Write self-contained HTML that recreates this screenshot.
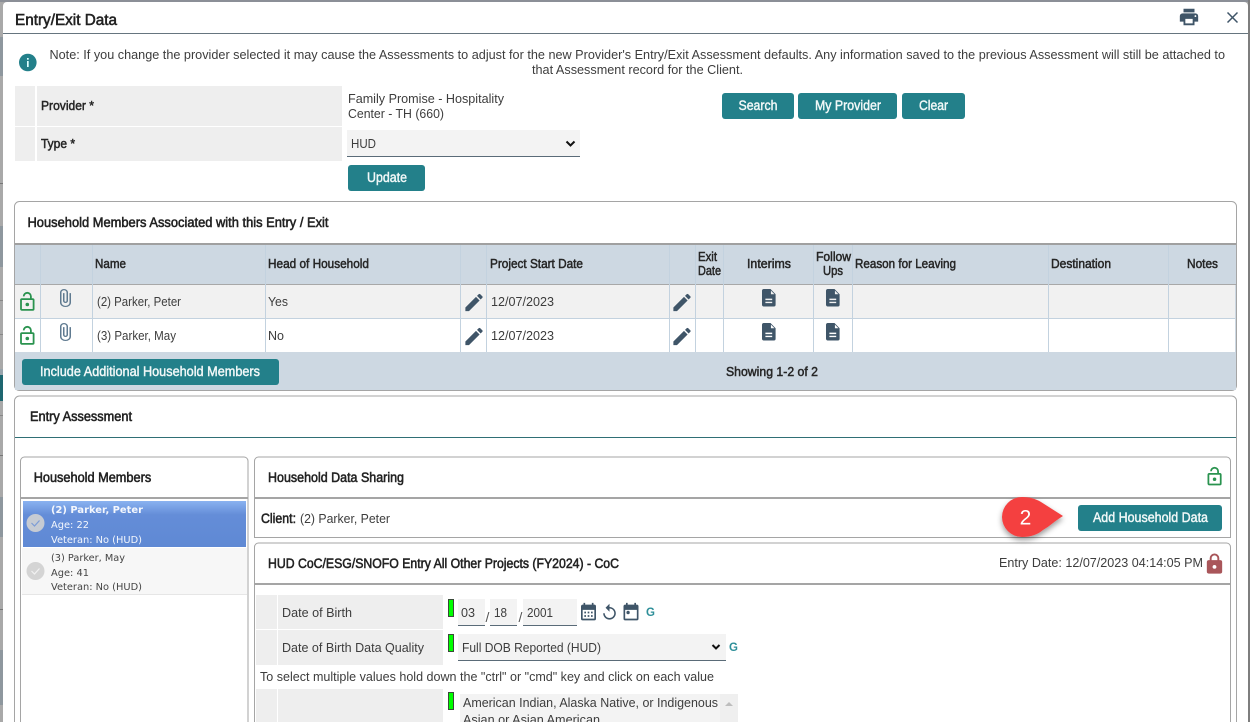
<!DOCTYPE html>
<html lang="en">
<head>
<meta charset="utf-8">
<title>Entry/Exit Data</title>
<style>
html,body{margin:0;padding:0;width:1250px;height:722px;overflow:hidden;background:#a8a8a8}
svg{display:block}
text{font-family:"Liberation Sans",Arial,sans-serif;font-size:13px;fill:#3d3d3d}
.b{fill:#262626;stroke:#262626;stroke-width:.5px}
.w{fill:#f2f8f8;stroke:#f2f8f8;stroke-width:.42px;font-size:13.5px}
.h{fill:#222;stroke:#222;stroke-width:.55px;font-size:13.5px}
.d{font-family:"DejaVu Sans",sans-serif;font-size:10px;fill:#444}
.ds{font-family:"DejaVu Sans",sans-serif;font-size:10px;fill:#f4f7fd}
.btn{fill:#23808a}
.ln{stroke:#c3d2df;stroke-width:1}
.sec{fill:#eeeeee}
.inp{fill:#f3f3f3}
.ub{fill:#5a6b78}
.ic{fill:#3f5568}
.gr{fill:#2a934f}
.g{font-size:11.500px;font-weight:bold;fill:#2e8f99}
</style>
</head>
<body>
<svg width="1250" height="722" viewBox="0 0 1250 722" xmlns="http://www.w3.org/2000/svg">
<defs>
<linearGradient id="sel" x1="0" y1="0" x2="0" y2="1"><stop offset="0" stop-color="#8ab2f0"/><stop offset=".3" stop-color="#648dd8"/><stop offset="1" stop-color="#5f89d4"/></linearGradient>
<filter id="sh" x="-30%" y="-30%" width="160%" height="170%"><feDropShadow dx="0" dy="3" stdDeviation="3" flood-color="#000" flood-opacity=".4"/></filter>
<path id="unlock" d="M18,20V10H6V20H18M18,8A2,2 0 0,1 20,10V20A2,2 0 0,1 18,22H6C4.89,22 4,21.1 4,20V10A2,2 0 0,1 6,8H15V6A3,3 0 0,0 12,3A3,3 0 0,0 9,6H7A5,5 0 0,1 12,1A5,5 0 0,1 17,6V8H18M12,17A2,2 0 0,1 10,15A2,2 0 0,1 12,13A2,2 0 0,1 14,15A2,2 0 0,1 12,17Z"/>
<path id="pencil" d="M20.71,7.04C21.1,6.65 21.1,6 20.71,5.63L18.37,3.29C18,2.9 17.35,2.9 16.96,3.29L15.12,5.12L18.87,8.87M3,17.25V21H6.75L17.81,9.93L14.06,6.18L3,17.25Z"/>
<path id="doc" fill-rule="evenodd" d="M6,2H14L20,8V20A2,2 0 0,1 18,22H6C4.89,22 4,21.1 4,20V4C4,2.89 4.89,2 6,2ZM14.500,3.800V8H18.700ZM8,13V14.700H16V13ZM8,16.500V18.200H16V16.500Z"/>
<path id="clip" d="M16.5,6V17.5A4,4 0 0,1 12.5,21.5A4,4 0 0,1 8.5,17.5V5A2.5,2.5 0 0,1 11,2.5A2.5,2.5 0 0,1 13.5,5V15.5A1,1 0 0,1 12.5,16.5A1,1 0 0,1 11.5,15.5V6H10V15.5A2.5,2.5 0 0,0 12.5,18A2.5,2.5 0 0,0 15,15.5V5A4,4 0 0,0 11,1A4,4 0 0,0 7,5V17.5A5.5,5.5 0 0,0 12.5,23A5.5,5.5 0 0,0 18,17.5V6H16.5Z"/>
</defs>

<!-- backdrop -->
<rect width="1250" height="722" fill="#a9a9a9"/>
<rect width="1250" height="2" fill="#8b8f97"/>
<rect x="0" y="37" width="3" height="39" fill="#8e979e"/>
<rect x="0" y="183" width="3" height="1" fill="#777"/>
<rect x="0" y="226" width="3" height="41" fill="#8e979e"/>
<rect x="0" y="300" width="3" height="1" fill="#888"/>
<rect x="0" y="334" width="3" height="1" fill="#888"/>
<rect x="0" y="369" width="3" height="6" fill="#98a4ac"/>
<rect x="0" y="375" width="3" height="26" fill="#1e6670"/>
<rect x="0" y="415" width="3" height="1" fill="#888"/>
<rect x="0" y="455" width="3" height="1" fill="#777"/>
<rect x="0" y="497" width="3" height="40" fill="#8e979e"/>
<rect x="0" y="609" width="3" height="1" fill="#777"/>
<rect x="0" y="650" width="3" height="55" fill="#8e979e"/>
<rect x="1248" y="0" width="2" height="722" fill="#7e7e7e"/>

<!-- modal -->
<path d="M3,722V6a4,4 0 0 1 4,-4H1244a4,4 0 0 1 4,4V722Z" fill="#fff"/>
<rect x="3" y="33" width="1245" height="1" fill="#66757f"/>
<text x="15" y="25" class="h" style="font-size:15.500px" textLength="102" lengthAdjust="spacingAndGlyphs">Entry/Exit Data</text>
<svg x="1178" y="6" width="22" height="22" viewBox="0 0 24 24"><path class="ic" d="M18,3H6V7H18M19,12A1,1 0 0,1 18,11A1,1 0 0,1 19,10A1,1 0 0,1 20,11A1,1 0 0,1 19,12M16,19H8V14H16M19,8H5A3,3 0 0,0 2,11V17H6V21H18V17H22V11A3,3 0 0,0 19,8Z"/></svg>
<path d="M1227.500,12.500L1237.500,22.500M1237.500,12.500L1227.500,22.500" stroke="#3f5568" stroke-width="1.500" fill="none"/>

<!-- note -->
<circle cx="27.800" cy="62.500" r="8.800" fill="#23808a"/>
<rect x="27" y="61" width="1.700" height="6" fill="#dff"/>
<rect x="27" y="58" width="1.700" height="1.700" fill="#dff"/>
<text x="49.500" y="59" textLength="1175.500" lengthAdjust="spacingAndGlyphs">Note: If you change the provider selected it may cause the Assessments to adjust for the new Provider's Entry/Exit Assessment defaults. Any information saved to the previous Assessment will still be attached to</text>
<text x="532" y="74" textLength="211" lengthAdjust="spacingAndGlyphs">that Assessment record for the Client.</text>

<!-- provider form -->
<rect x="15" y="86" width="20" height="40" class="sec"/><rect x="37" y="86" width="305" height="40" class="sec"/>
<rect x="15" y="127" width="20" height="34" class="sec"/><rect x="37" y="127" width="305" height="34" class="sec"/>
<text x="41" y="110" class="b" textLength="53" lengthAdjust="spacingAndGlyphs">Provider *</text>
<text x="41" y="148" class="b" textLength="34" lengthAdjust="spacingAndGlyphs">Type *</text>
<text x="348" y="103" textLength="156" lengthAdjust="spacingAndGlyphs">Family Promise - Hospitality</text>
<text x="348" y="118" textLength="96" lengthAdjust="spacingAndGlyphs">Center - TH (660)</text>
<rect x="347" y="130" width="233" height="26" class="inp"/><rect x="347" y="156" width="233" height="1" class="ub"/>
<text x="351" y="148" textLength="25" lengthAdjust="spacingAndGlyphs">HUD</text>
<path d="M566.500,141.500L570.500,145.500L574.500,141.500" stroke="#111" stroke-width="2" fill="none"/>
<rect x="348" y="165" width="77" height="26" rx="3" class="btn"/>
<text x="367" y="182" class="w" textLength="40" lengthAdjust="spacingAndGlyphs">Update</text>
<rect x="722" y="93" width="72" height="26" rx="3" class="btn"/>
<text x="738.500" y="110" class="w" textLength="39" lengthAdjust="spacingAndGlyphs">Search</text>
<rect x="798" y="93" width="99" height="26" rx="3" class="btn"/>
<text x="815" y="110" class="w" textLength="66" lengthAdjust="spacingAndGlyphs">My Provider</text>
<rect x="902" y="93" width="63" height="26" rx="3" class="btn"/>
<text x="919" y="110" class="w" textLength="29" lengthAdjust="spacingAndGlyphs">Clear</text>

<!-- household panel -->
<rect x="14.500" y="201.500" width="1222" height="189" rx="5" fill="#fff" stroke="#a5a5a5"/>
<text x="27.500" y="227" class="h" textLength="301" lengthAdjust="spacingAndGlyphs">Household Members Associated with this Entry / Exit</text>
<rect x="15" y="245" width="1221" height="145" fill="#cdd8e2"/>
<rect x="15" y="243" width="1221" height="2" fill="#a0a0a0"/>
<rect x="15" y="284" width="1221" height="1" fill="#a8a8a8"/>
<rect x="15" y="285" width="1220" height="33" fill="#f1f1f1"/>
<rect x="15" y="319" width="1220" height="33" fill="#fff"/>
<rect x="15" y="318" width="1220" height="1" fill="#c3d2df"/>
<g class="ln">
<path d="M40.500,245V352M92.500,245V352M265.500,245V352M460.500,245V352M486.500,245V352M669.500,245V352M695.500,245V352M723.500,245V352M813.500,245V352M852.500,245V352M1048.500,245V352M1168.500,245V352" fill="none"/>
</g>
<text x="95" y="268" class="b" textLength="31" lengthAdjust="spacingAndGlyphs">Name</text>
<text x="268" y="268" class="b" textLength="101" lengthAdjust="spacingAndGlyphs">Head of Household</text>
<text x="490" y="268" class="b" textLength="93" lengthAdjust="spacingAndGlyphs">Project Start Date</text>
<text x="698" y="261" class="b" textLength="19" lengthAdjust="spacingAndGlyphs">Exit</text>
<text x="698" y="275" class="b" textLength="23" lengthAdjust="spacingAndGlyphs">Date</text>
<text x="747" y="268" class="b" textLength="44" lengthAdjust="spacingAndGlyphs">Interims</text>
<text x="816" y="261" class="b" textLength="35" lengthAdjust="spacingAndGlyphs">Follow</text>
<text x="823" y="275" class="b" textLength="20" lengthAdjust="spacingAndGlyphs">Ups</text>
<text x="855" y="268" class="b" textLength="101" lengthAdjust="spacingAndGlyphs">Reason for Leaving</text>
<text x="1051" y="268" class="b" textLength="60" lengthAdjust="spacingAndGlyphs">Destination</text>
<text x="1187" y="268" class="b" textLength="31" lengthAdjust="spacingAndGlyphs">Notes</text>
<text x="97" y="306" textLength="84" lengthAdjust="spacingAndGlyphs">(2) Parker, Peter</text>
<text x="268" y="306" textLength="20" lengthAdjust="spacingAndGlyphs">Yes</text>
<text x="491" y="306" textLength="63" lengthAdjust="spacingAndGlyphs">12/07/2023</text>
<text x="97" y="340" textLength="79" lengthAdjust="spacingAndGlyphs">(3) Parker, May</text>
<text x="268" y="340" textLength="16" lengthAdjust="spacingAndGlyphs">No</text>
<text x="491" y="340" textLength="63" lengthAdjust="spacingAndGlyphs">12/07/2023</text>

<!-- row icons -->
<g class="gr">
<use href="#unlock" transform="translate(16.500,291) scale(.9)"/>
<use href="#unlock" transform="translate(16.500,325) scale(.9)"/>
</g>
<g fill="#5f7a90">
<use href="#clip" transform="translate(53,288.200) scale(1,.82)"/>
<use href="#clip" transform="translate(53,322.200) scale(1,.82)"/>
</g>
<g class="ic">
<use href="#pencil" transform="translate(462.500,291) scale(.96)"/>
<use href="#pencil" transform="translate(462.500,325) scale(.96)"/>
<use href="#pencil" transform="translate(670.500,291) scale(.96)"/>
<use href="#pencil" transform="translate(670.500,325) scale(.96)"/>
<use href="#doc" transform="translate(758.600,287.250) scale(.85,.875)"/>
<use href="#doc" transform="translate(758.600,321.250) scale(.85,.875)"/>
<use href="#doc" transform="translate(822.600,287.250) scale(.85,.875)"/>
<use href="#doc" transform="translate(822.600,321.250) scale(.85,.875)"/>
</g>

<rect x="22" y="359" width="257" height="26" rx="3" class="btn"/>
<text x="40" y="376" class="w" textLength="220" lengthAdjust="spacingAndGlyphs">Include Additional Household Members</text>
<text x="726" y="376" class="b" textLength="92" lengthAdjust="spacingAndGlyphs">Showing 1-2 of 2</text>

<!-- entry assessment -->
<path d="M14.500,722V401a5,5 0 0 1 5,-5H1231.500a5,5 0 0 1 5,5V722" fill="#fff" stroke="#a5a5a5"/>
<text x="30" y="421" class="h" textLength="102" lengthAdjust="spacingAndGlyphs">Entry Assessment</text>
<rect x="15" y="437" width="1221" height="1" fill="#2f6f75"/>

<!-- household members list -->
<path d="M20.500,722V461a4,4 0 0 1 4,-4H244a4,4 0 0 1 4,4V722" fill="#fff" stroke="#a5a5a5"/>
<rect x="21" y="497" width="227" height="2" fill="#a5a5a5"/>
<text x="33.700" y="482" class="h" textLength="117.500" lengthAdjust="spacingAndGlyphs">Household Members</text>
<rect x="23" y="501" width="223" height="46" fill="url(#sel)"/>
<rect x="22" y="548" width="225" height="46" fill="#f7f7f7"/>
<rect x="22" y="594" width="225" height="1" fill="#e6e6e6"/>
<circle cx="35.500" cy="523" r="9" fill="#c6cbd3"/>
<path d="M31.500,523L34.500,526L39.500,520.500" stroke="#7c9cd6" stroke-width="1.200" fill="none"/>
<circle cx="35.500" cy="571" r="9" fill="#d4d4d4"/>
<path d="M31.500,571L34.500,574L39.500,568.500" stroke="#f2f2f2" stroke-width="1.200" fill="none"/>
<text x="51" y="513" class="ds" style="font-weight:bold" textLength="92" lengthAdjust="spacingAndGlyphs">(2) Parker, Peter</text>
<text x="51" y="528" class="ds" textLength="38" lengthAdjust="spacingAndGlyphs">Age: 22</text>
<text x="51" y="543" class="ds" textLength="91" lengthAdjust="spacingAndGlyphs">Veteran: No (HUD)</text>
<text x="51" y="561" class="d" textLength="74" lengthAdjust="spacingAndGlyphs">(3) Parker, May</text>
<text x="51" y="576" class="d" textLength="38" lengthAdjust="spacingAndGlyphs">Age: 41</text>
<text x="51" y="590" class="d" textLength="91" lengthAdjust="spacingAndGlyphs">Veteran: No (HUD)</text>

<!-- data sharing -->
<path d="M254.500,498V461a4,4 0 0 1 4,-4H1226.500a4,4 0 0 1 4,4V498" fill="#fff" stroke="#a5a5a5"/>
<rect x="254" y="497" width="977" height="2" fill="#a5a5a5"/>
<text x="268" y="482" class="h" textLength="136" lengthAdjust="spacingAndGlyphs">Household Data Sharing</text>
<use href="#unlock" class="gr" transform="translate(1204,466) scale(.88)"/>
<path d="M254.500,499V537.500H1230.500V499" fill="#fff" stroke="#a5a5a5"/>
<text x="261" y="523" class="h" textLength="35" lengthAdjust="spacingAndGlyphs">Client:</text>
<text x="300" y="523" textLength="90" lengthAdjust="spacingAndGlyphs">(2) Parker, Peter</text>
<rect x="1078" y="505" width="144" height="26" rx="3" class="btn"/>
<text x="1093" y="522" class="w" textLength="115" lengthAdjust="spacingAndGlyphs">Add Household Data</text>

<!-- HUD assessment -->
<path d="M254.500,722V547a4,4 0 0 1 4,-4H1226.500a4,4 0 0 1 4,4V722" fill="#fff" stroke="#a5a5a5"/>
<rect x="255" y="583" width="975" height="2" fill="#a5a5a5"/>
<text x="268" y="568" class="h" textLength="351" lengthAdjust="spacingAndGlyphs">HUD CoC/ESG/SNOFO Entry All Other Projects (FY2024) - CoC</text>
<text x="999" y="567" textLength="204" lengthAdjust="spacingAndGlyphs">Entry Date: 12/07/2023 04:14:05 PM</text>
<svg x="1203" y="552.500" width="23" height="23" viewBox="0 0 24 24"><path fill="#a9565a" d="M12,17A2,2 0 0,0 14,15C14,13.89 13.1,13 12,13A2,2 0 0,0 10,15A2,2 0 0,0 12,17M18,8A2,2 0 0,1 20,10V20A2,2 0 0,1 18,22H6A2,2 0 0,1 4,20V10C4,8.89 4.9,8 6,8H7V6A5,5 0 0,1 12,1A5,5 0 0,1 17,6V8H18M12,3A3,3 0 0,0 9,6V8H15V6A3,3 0 0,0 12,3Z"/></svg>

<rect x="256" y="595" width="21" height="34" class="sec"/><rect x="278" y="595" width="165" height="34" class="sec"/>
<rect x="256" y="630" width="21" height="35" class="sec"/><rect x="278" y="630" width="165" height="35" class="sec"/>
<rect x="256" y="689" width="21" height="33" class="sec"/><rect x="278" y="689" width="165" height="33" class="sec"/>
<text x="282" y="617" textLength="70" lengthAdjust="spacingAndGlyphs">Date of Birth</text>
<text x="282" y="652" textLength="142" lengthAdjust="spacingAndGlyphs">Date of Birth Data Quality</text>
<text x="260" y="681" textLength="454" lengthAdjust="spacingAndGlyphs">To select multiple values hold down the "ctrl" or "cmd" key and click on each value</text>

<g fill="#0f0" stroke="#3a4a3a" stroke-width="1">
<rect x="448.500" y="599.500" width="5" height="17"/>
<rect x="448.500" y="634.500" width="5" height="17"/>
<rect x="448.500" y="692.500" width="5" height="17"/>
</g>

<rect x="458" y="599" width="27" height="26" class="inp"/><rect x="458" y="625" width="27" height="1" class="ub"/>
<rect x="490" y="599" width="27" height="26" class="inp"/><rect x="490" y="625" width="27" height="1" class="ub"/>
<rect x="523" y="599" width="54" height="26" class="inp"/><rect x="523" y="625" width="54" height="1" class="ub"/>
<text x="461" y="617" textLength="14" lengthAdjust="spacingAndGlyphs">03</text>
<text x="494" y="617" textLength="13" lengthAdjust="spacingAndGlyphs">18</text>
<text x="527" y="617" textLength="26" lengthAdjust="spacingAndGlyphs">2001</text>
<text x="485.500" y="622" style="font-size:14px;fill:#555">/</text>
<text x="518.500" y="622" style="font-size:14px;fill:#555">/</text>

<svg x="578.500" y="602" width="20" height="21" viewBox="0 0 24 24" preserveAspectRatio="none"><path class="ic" fill-rule="evenodd" d="M19,3H18V1H16V3H8V1H6V3H5C3.89,3 3,3.9 3,5V19A2,2 0 0,0 5,21H19A2,2 0 0,0 21,19V5A2,2 0 0,0 19,3ZM19,19H5V9H19V19ZM7,11H9V13H7V11M11,11H13V13H11V11M15,11H17V13H15V11M7,15H9V17H7V15M11,15H13V17H11V15M15,15H17V17H15V15Z"/></svg>
<svg x="600" y="603" width="19" height="19" viewBox="0 0 24 24"><path class="ic" d="M12,5V1L7,6l5,5V7c3.31,0 6,2.69 6,6s-2.69,6-6,6-6-2.69-6-6H4c0,4.42 3.58,8 8,8s8-3.58 8-8-3.58-8-8-8z"/></svg>
<svg x="621" y="602" width="20" height="21" viewBox="0 0 24 24" preserveAspectRatio="none"><path class="ic" fill-rule="evenodd" d="M19,3H18V1H16V3H8V1H6V3H5A2,2 0 0,0 3,5V19A2,2 0 0,0 5,21H19A2,2 0 0,0 21,19V5A2,2 0 0,0 19,3ZM19,19H5V9H19V19Z"/><circle class="ic" cx="8.500" cy="12" r="2"/></svg>
<text x="646" y="616" class="g">G</text>

<rect x="458" y="634" width="268" height="26" class="inp"/><rect x="458" y="660" width="268" height="1" class="ub"/>
<text x="462" y="652" textLength="139" lengthAdjust="spacingAndGlyphs">Full DOB Reported (HUD)</text>
<path d="M712.500,645L716,648.500L719.500,645" stroke="#111" stroke-width="2" fill="none"/>
<text x="729" y="651" class="g">G</text>

<rect x="460" y="694" width="278" height="28" class="inp"/>
<rect x="720" y="694" width="18" height="28" fill="#efefef"/>
<path d="M725,706H733L729,702Z" fill="#bdbdbd"/>
<text x="463" y="707" textLength="255" lengthAdjust="spacingAndGlyphs">American Indian, Alaska Native, or Indigenous</text>
<text x="463" y="724" textLength="137" lengthAdjust="spacingAndGlyphs">Asian or Asian American</text>

<!-- callout -->
<path d="M1022,497C1030,497 1036,499 1041,502L1063,516C1056,520 1050,526 1043,530C1037,535 1030,537 1022,537A20,20 0 0 1 1022,497Z" fill="#f44040" filter="url(#sh)"/>
<text x="1025.500" y="524.500" text-anchor="middle" style="font-size:21px;fill:#fff">2</text>
</svg>
</body>
</html>
